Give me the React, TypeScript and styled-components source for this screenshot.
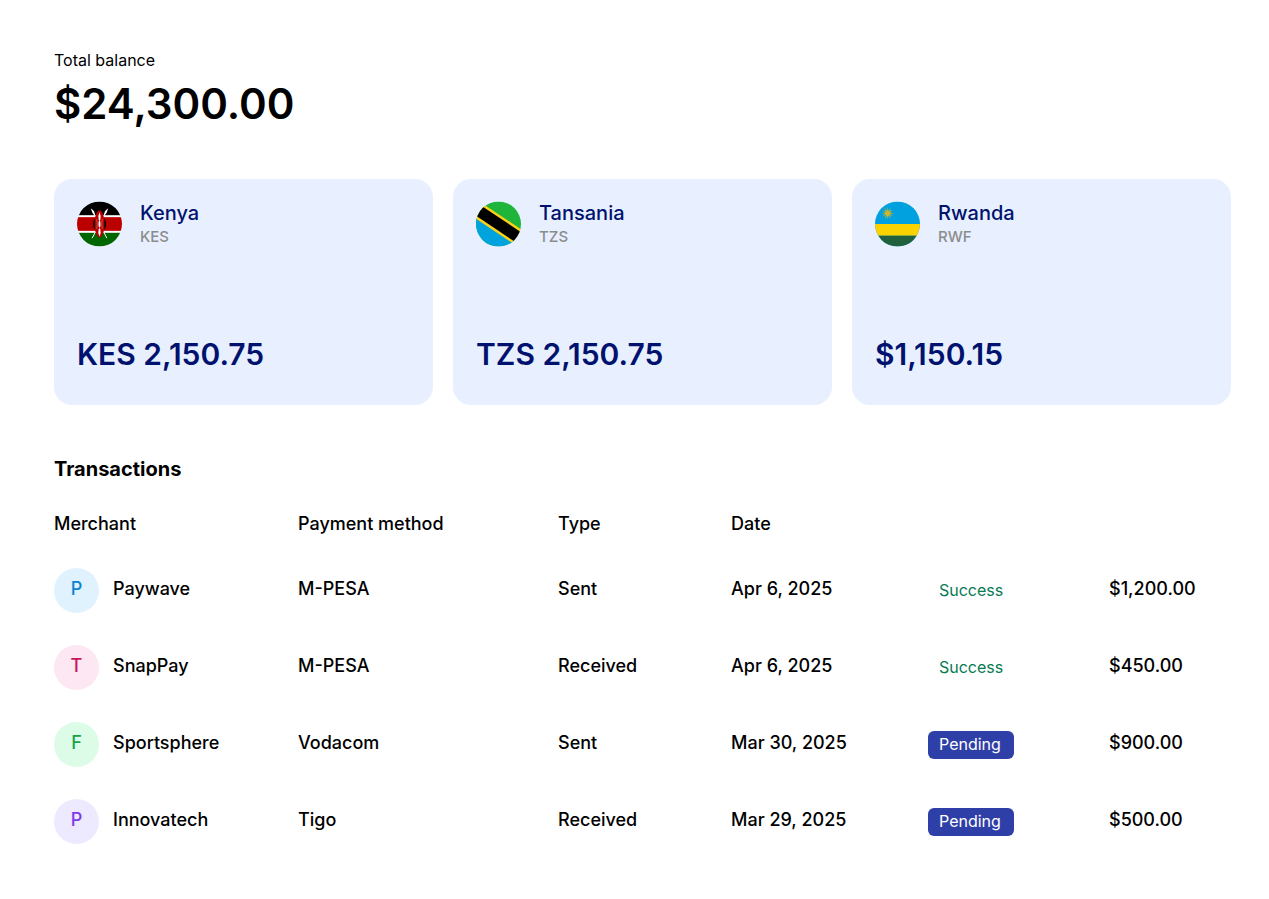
import React from "react";
import styled, { createGlobalStyle } from "styled-components";

const GlobalStyle = createGlobalStyle`
  *, *::before, *::after {
    box-sizing: border-box;
  }
  body {
    margin: 0;
    background: #ffffff;
    color: #000000;
    font-family: Inter, "Liberation Sans", sans-serif;
    font-size: 18px;
    font-weight: 500;
  }
  h1, h2, h3, p {
    margin: 0;
  }
`;

const Page = styled.main`
  padding: 48px 38px 38px 54px;
`;

const BalanceLabel = styled.h1`
  font-size: 16px;
  font-weight: 400;
  line-height: 24px;
`;

const BalanceAmount = styled.p`
  font-size: 42px;
  font-weight: 600;
  line-height: 64px;
`;

const WalletGrid = styled.section`
  display: grid;
  grid-template-columns: repeat(3, 1fr);
  gap: 20px;
  margin-top: 43px;
`;

const WalletCard = styled.article`
  display: flex;
  flex-direction: column;
  justify-content: space-between;
  min-height: 226px;
  padding: 22px 23px 31px;
  border-radius: 18px;
  background: #e8f0ff;
  color: #00126e;
`;

const WalletHeader = styled.header`
  display: flex;
  gap: 18px;

  svg {
    flex: none;
    width: 45px;
    height: 46px;
  }
`;

const Country = styled.h2`
  font-size: 20px;
  font-weight: 500;
  line-height: 24px;
`;

const Currency = styled.p`
  color: #8c8c8c;
  font-size: 15px;
  font-weight: 500;
  line-height: 24px;
`;

const WalletAmount = styled.p`
  font-size: 30px;
  font-weight: 600;
  line-height: 40px;
`;

const Transactions = styled.section`
  margin-top: 48px;
`;

const SectionTitle = styled.h2`
  font-size: 20px;
  font-weight: 700;
  line-height: 32px;
`;

const Table = styled.table`
  width: 100%;
  margin-top: 10px;
  border-collapse: collapse;
  table-layout: fixed;
`;

const HeadCell = styled.th<{ $width: number }>`
  width: ${({ $width }) => $width}px;
  height: 57px;
  padding: 0;
  font-weight: 500;
  text-align: left;
`;

const Cell = styled.td`
  height: 77px;
  padding: 0;
`;

const TextCell = styled(Cell)`
  padding-bottom: 4px;
`;

const Merchant = styled.div`
  display: flex;
  align-items: center;
  gap: 14px;
`;

const MerchantName = styled.span`
  padding-bottom: 4px;
`;

const Avatar = styled.span<{ $bg: string; $fg: string }>`
  display: grid;
  place-items: center;
  width: 45px;
  height: 45px;
  padding-bottom: 4px;
  border-radius: 50%;
  background: ${({ $bg }) => $bg};
  color: ${({ $fg }) => $fg};
`;

const Status = styled.span<{ $pending: boolean }>`
  display: inline-block;
  padding: 0 13px 2px 11px;
  border-radius: 6px;
  background: ${({ $pending }) => ($pending ? "#2f3fa8" : "transparent")};
  color: ${({ $pending }) => ($pending ? "#ffffff" : "#067a52")};
  font-size: 16px;
  font-weight: 400;
  line-height: 26px;
`;

function KenyaFlag() {
  return (
    <svg viewBox="0 0 46 46" aria-hidden="true">
      <clipPath id="kenya"><circle cx="23" cy="23" r="23" /></clipPath>
      <g clipPath="url(#kenya)">
        <rect width="46" height="46" fill="#fff" />
        <rect width="46" height="14" fill="#000" />
        <rect y="16" width="46" height="14" fill="#b00" />
        <rect y="32" width="46" height="14" fill="#060" />
        <path d="M15.500 8.500L30.500 37.500M30.500 8.500L15.500 37.500" stroke="#fff" strokeWidth="1" />
        <path d="M14 7l3.500 3 1 5-2.500-3zM32 7l-3.500 3-1 5 2.500-3z" fill="#fff" />
        <ellipse cx="23" cy="23" rx="6.800" ry="8" fill="#000" />
        <path d="M23 9C26.500 10 28 16 28 23S26.500 36 23 37C19.500 36 18 30 18 23S19.500 10 23 9z" fill="#b00" />
        <path d="M23 11q2 4 .8 8q-.8 1.500-1.600 0Q21 15 23 11zM23 36q2-4 .8-8q-.8-1.500-1.600 0Q21 32 23 36z" fill="#fff" />
        <ellipse cx="23" cy="23" rx="1" ry="3.600" fill="#fff" />
        <path d="M20.200 18q1 5 0 10M25.800 18q-1 5 0 10" fill="none" stroke="#e9a0a0" strokeWidth=".5" />
      </g>
    </svg>
  );
}

function TanzaniaFlag() {
  return (
    <svg viewBox="0 0 46 46" aria-hidden="true">
      <clipPath id="tanzania"><circle cx="23" cy="23" r="23" /></clipPath>
      <g clipPath="url(#tanzania)">
        <rect width="46" height="46" fill="#1eb53a" />
        <path d="M0 8L46 38V46H0z" fill="#00a3dd" />
        <path d="M-4-5L50 31V51L-4 15z" fill="#fcd116" />
        <path d="M-4-2L50 34V48L-4 12z" fill="#000" />
      </g>
    </svg>
  );
}

function RwandaFlag() {
  const rays = Array.from({ length: 12 }, (_, i) => i * 30);
  return (
    <svg viewBox="0 0 46 46" aria-hidden="true">
      <clipPath id="rwanda"><circle cx="23" cy="23" r="23" /></clipPath>
      <g clipPath="url(#rwanda)">
        <rect width="46" height="46" fill="#00a1de" />
        <rect y="23" width="46" height="12" fill="#fad201" />
        <rect y="35" width="46" height="11" fill="#20603d" />
        <g fill="#c9b52e">
          {rays.map((angle) => (
            <path key={angle} d="M12 12L13 5.500L14 12z" transform={`rotate(${angle} 13 12)`} />
          ))}
          <circle cx="13" cy="12" r="2.500" />
        </g>
      </g>
    </svg>
  );
}

const wallets = [
  { country: "Kenya", currency: "KES", amount: "KES 2,150.75", Flag: KenyaFlag },
  { country: "Tansania", currency: "TZS", amount: "TZS 2,150.75", Flag: TanzaniaFlag },
  { country: "Rwanda", currency: "RWF", amount: "$1,150.15", Flag: RwandaFlag },
];

const columns = [
  { label: "Merchant", width: 244 },
  { label: "Payment method", width: 260 },
  { label: "Type", width: 173 },
  { label: "Date", width: 197 },
  { label: "", width: 181 },
  { label: "", width: 122 },
];

const transactions = [
  { initial: "P", bg: "#dff2fe", fg: "#0a84d0", merchant: "Paywave", method: "M-PESA", type: "Sent", date: "Apr 6, 2025", status: "Success", amount: "$1,200.00" },
  { initial: "T", bg: "#fce7f3", fg: "#c8145e", merchant: "SnapPay", method: "M-PESA", type: "Received", date: "Apr 6, 2025", status: "Success", amount: "$450.00" },
  { initial: "F", bg: "#dcfce7", fg: "#16a34a", merchant: "Sportsphere", method: "Vodacom", type: "Sent", date: "Mar 30, 2025", status: "Pending", amount: "$900.00" },
  { initial: "P", bg: "#ede9fe", fg: "#7f3bea", merchant: "Innovatech", method: "Tigo", type: "Received", date: "Mar 29, 2025", status: "Pending", amount: "$500.00" },
];

export default function App() {
  return (
    <>
      <GlobalStyle />
      <Page>
        <BalanceLabel>Total balance</BalanceLabel>
        <BalanceAmount>$24,300.00</BalanceAmount>
        <WalletGrid>
          {wallets.map(({ country, currency, amount, Flag }) => (
            <WalletCard key={country}>
              <WalletHeader>
                <Flag />
                <div>
                  <Country>{country}</Country>
                  <Currency>{currency}</Currency>
                </div>
              </WalletHeader>
              <WalletAmount>{amount}</WalletAmount>
            </WalletCard>
          ))}
        </WalletGrid>
        <Transactions>
          <SectionTitle>Transactions</SectionTitle>
          <Table>
            <thead>
              <tr>
                {columns.map(({ label, width }, index) => (
                  <HeadCell key={index} scope="col" $width={width}>{label}</HeadCell>
                ))}
              </tr>
            </thead>
            <tbody>
              {transactions.map((row) => (
                <tr key={row.merchant}>
                  <Cell>
                    <Merchant>
                      <Avatar $bg={row.bg} $fg={row.fg}>{row.initial}</Avatar>
                      <MerchantName>{row.merchant}</MerchantName>
                    </Merchant>
                  </Cell>
                  <TextCell>{row.method}</TextCell>
                  <TextCell>{row.type}</TextCell>
                  <TextCell>{row.date}</TextCell>
                  <Cell>
                    <Status $pending={row.status === "Pending"}>{row.status}</Status>
                  </Cell>
                  <TextCell>{row.amount}</TextCell>
                </tr>
              ))}
            </tbody>
          </Table>
        </Transactions>
      </Page>
    </>
  );
}
